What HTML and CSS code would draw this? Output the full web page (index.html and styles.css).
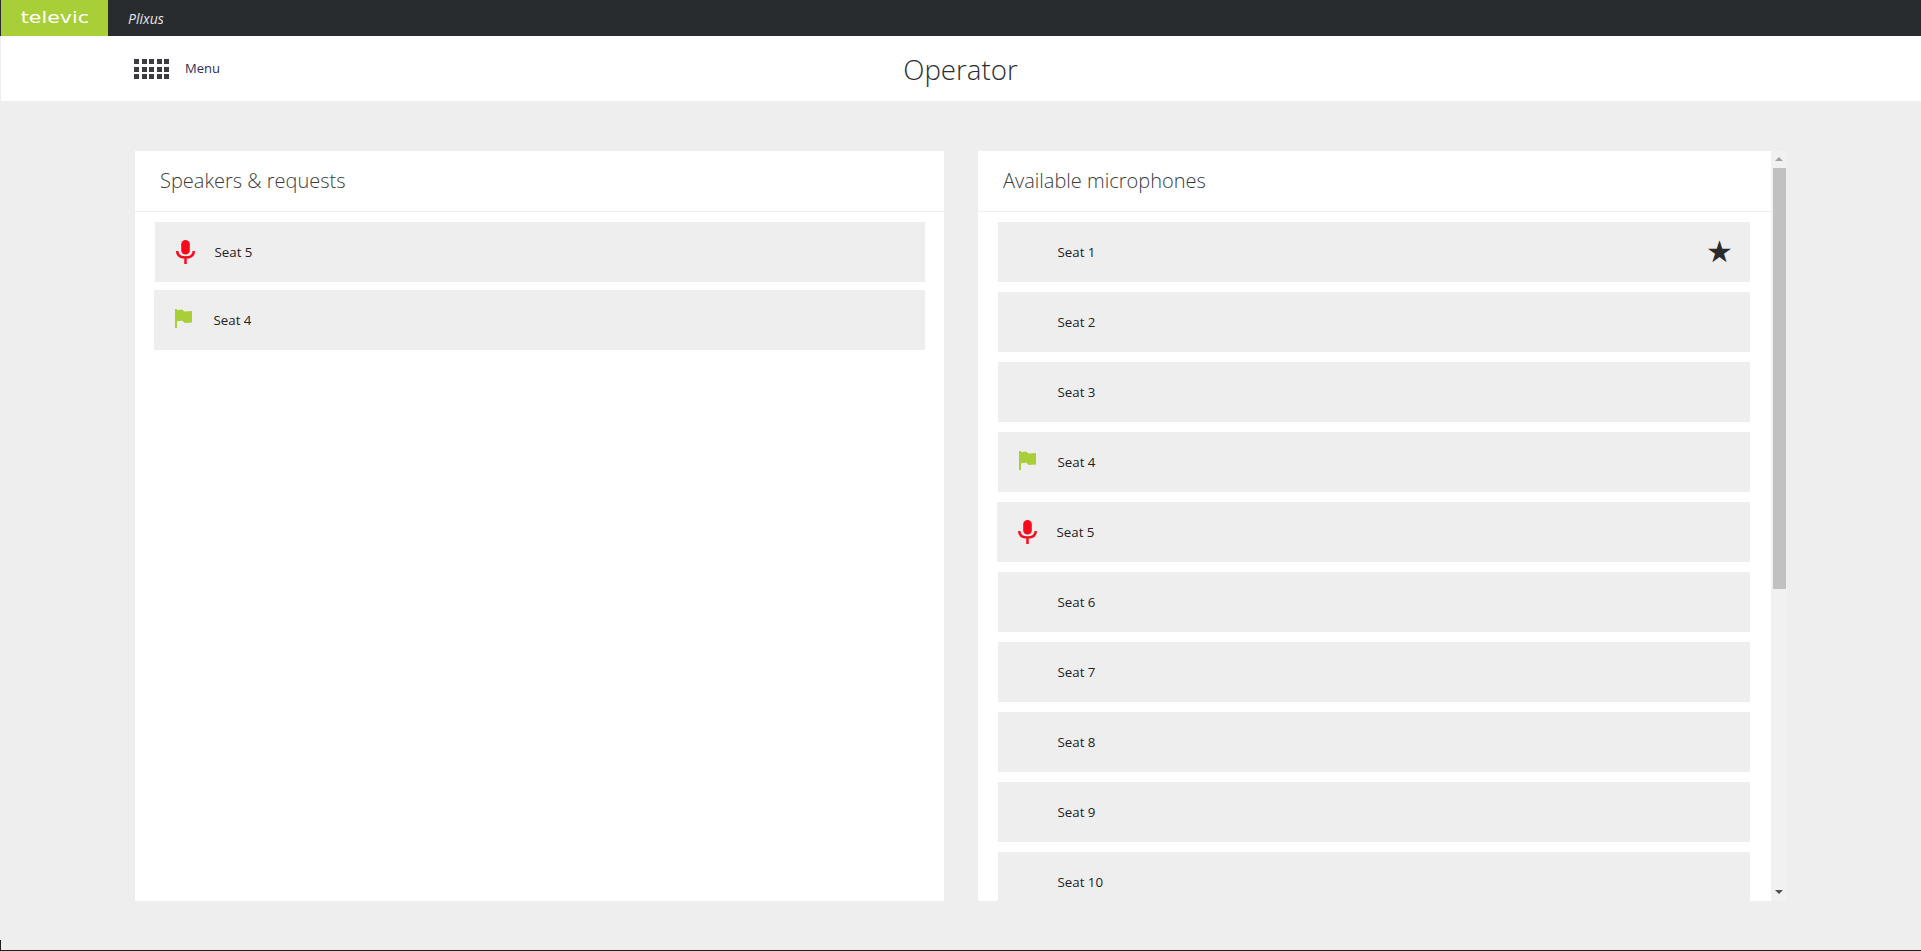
FILE: index.html
```html
<!DOCTYPE html>
<html lang="en">
<head>
<meta charset="utf-8">
<title>Operator</title>
<link rel="stylesheet" href="styles.css">
</head>
<body>
<div class="page">
  <header class="topbar">
    <div class="logo"><span class="logo-text">televic</span></div>
    <span class="product">Plixus</span>
  </header>
  <div class="subbar">
    <div class="menu">
      <div class="grid-icon">
        <i></i><i></i><i></i><i></i><i></i>
        <i></i><i></i><i></i><i></i><i></i>
        <i></i><i></i><i></i><i></i><i></i>
      </div>
      <span class="menu-label">Menu</span>
    </div>
    <h1 class="title">Operator</h1>
  </div>
  <main class="content">
    <section class="panel panel-left">
      <h2 class="panel-title">Speakers &amp; requests</h2>
      <div class="list list-left">
        <div class="seat">
          <span class="seat-icon"><svg class="mic" viewBox="0 0 19 24"><rect class="mic-head" x="5.200" y="0" width="8.600" height="14.500" rx="4.300"/><path class="mic-cradle" d="M1.250 11c0 4.500 3.700 6.500 8.250 6.500s8.250-2 8.250-6.500M9.500 17.500V24"/></svg></span>
          <span class="seat-name">Seat 5</span>
        </div>
        <div class="seat seat-out">
          <span class="seat-icon"><svg class="flag" viewBox="0 0 17 19"><path d="M0 0h2v1.300l5-.8 2.500 2 7.500-.5v11.500l-7 .5-2.800-2.300-5.200.5V19H0z"/></svg></span>
          <span class="seat-name">Seat 4</span>
        </div>
      </div>
    </section>
    <section class="panel panel-right">
      <div class="panel-body">
        <h2 class="panel-title">Available microphones</h2>
        <div class="list list-right">
          <div class="seat"><span class="seat-icon"></span><span class="seat-name">Seat 1</span><span class="star">★</span></div>
          <div class="seat"><span class="seat-icon"></span><span class="seat-name">Seat 2</span></div>
          <div class="seat"><span class="seat-icon"></span><span class="seat-name">Seat 3</span></div>
          <div class="seat"><span class="seat-icon"><svg class="flag" viewBox="0 0 17 19"><path d="M0 0h2v1.300l5-.8 2.500 2 7.500-.5v11.500l-7 .5-2.800-2.300-5.200.5V19H0z"/></svg></span><span class="seat-name">Seat 4</span></div>
          <div class="seat seat-out"><span class="seat-icon"><svg class="mic" viewBox="0 0 19 24"><rect class="mic-head" x="5.200" y="0" width="8.600" height="14.500" rx="4.300"/><path class="mic-cradle" d="M1.250 11c0 4.500 3.700 6.500 8.250 6.500s8.250-2 8.250-6.500M9.500 17.500V24"/></svg></span><span class="seat-name">Seat 5</span></div>
          <div class="seat"><span class="seat-icon"></span><span class="seat-name">Seat 6</span></div>
          <div class="seat"><span class="seat-icon"></span><span class="seat-name">Seat 7</span></div>
          <div class="seat"><span class="seat-icon"></span><span class="seat-name">Seat 8</span></div>
          <div class="seat"><span class="seat-icon"></span><span class="seat-name">Seat 9</span></div>
          <div class="seat"><span class="seat-icon"></span><span class="seat-name">Seat 10</span></div>
        </div>
      </div>
      <div class="scrollbar">
        <span class="arrow arrow-up"></span>
        <span class="thumb-track"><span class="thumb"></span></span>
        <span class="arrow arrow-down"></span>
      </div>
    </section>
  </main>
</div>
</body>
</html>
```
FILE: styles.css
```css
* { box-sizing: border-box; }
html, body { margin: 0; height: 100%; overflow: hidden; }
body {
  background: #eeeeee;
  font-family: "Open Sans", "Noto Sans", sans-serif;
  color: #2b2e31;
}
.page {
  height: 951px;
  position: relative;
  display: flex;
  flex-direction: column;
  border-bottom: 1px solid #1c1e20;
}
.page::after {
  content: "";
  position: absolute;
  left: 0;
  bottom: 0;
  width: 1px;
  height: 10px;
  background: #1c1e20;
}
.topbar {
  height: 36px;
  flex: none;
  display: flex;
  align-items: center;
  background: #282c2f;
}
.logo {
  width: 107px;
  height: 36px;
  margin-left: 1px;
  background: #a8cf38;
  display: flex;
  align-items: center;
  justify-content: center;
}
.logo-text {
  font-family: "DejaVu Sans", sans-serif;
  font-size: 15px;
  font-weight: 400;
  color: #fff;
  transform: scaleX(1.37);
}
.product {
  margin-left: 20px;
  font-size: 14px;
  font-style: italic;
  color: #e4e6e8;
}
.subbar {
  height: 65px;
  flex: none;
  margin-left: 1px;
  background: #fff;
  position: relative;
  display: flex;
  align-items: center;
  justify-content: center;
}
.menu {
  position: absolute;
  left: 133px;
  top: 23px;
  display: flex;
  align-items: center;
  gap: 16px;
}
.grid-icon {
  display: grid;
  grid-template-columns: repeat(5, 5px);
  grid-auto-rows: 5px;
  gap: 2.500px;
}
.grid-icon i { background: #3a3c3f; }
.menu-label { font-size: 13px; line-height: 18px; margin-top: -2px; color: #2d2d55; }
.title {
  margin: 0 0 0 -1px;
  font-size: 27.700px;
  font-weight: 300;
  color: #2b2e31;
  position: relative;
  top: 0;
}
.content {
  flex: 1;
  min-height: 0;
  display: flex;
  gap: 34px;
  padding: 50px 0 49px 135px;
}
.panel { background: #fff; overflow: hidden; }
.panel-left { width: 809px; }
.panel-right { width: 809px; display: flex; }
.panel-body { flex: 1; min-width: 0; overflow: hidden; }
.panel-title {
  margin: 0;
  height: 61px;
  padding: 16px 0 0 25px;
  font-size: 20px;
  line-height: 27px;
  font-weight: 300;
  color: #3a3c3e;
  border-bottom: 1px solid #efefef;
}
.list { display: flex; flex-direction: column; }
.list-left { padding: 10px 19px 0 20px; gap: 8px; }
.list-right { padding: 10px 21px 0 20px; gap: 10px; }
.seat {
  height: 60px;
  flex: none;
  background: #eeeeee;
  display: flex;
  align-items: center;
  font-size: 13.300px;
  font-weight: 400;
  color: #1e2125;
}
.seat-out { margin-left: -1px; }
.seat-icon {
  width: 60px;
  flex: none;
  display: flex;
  justify-content: center;
  align-items: center;
}
.seat-name { flex: 1; margin-left: -0.500px; }
.mic { width: 19px; height: 24px; }
.mic-head { fill: #fb0a1e; }
.mic-cradle { fill: none; stroke: #fb0a1e; stroke-width: 2.500; }
.flag { width: 17px; height: 19px; fill: #a8cf38; margin-left: -1px; margin-top: -3px; }
.star {
  width: 44px;
  font-family: "DejaVu Sans", sans-serif;
  font-size: 30px;
  line-height: 1;
  color: #2b2b2b;
}
.scrollbar {
  width: 16px;
  flex: none;
  background: #f1f1f1;
  display: flex;
  flex-direction: column;
}
.arrow { height: 17px; flex: none; position: relative; }
.arrow::after {
  content: "";
  position: absolute;
  left: 4px;
  width: 0;
  height: 0;
  border-left: 4px solid transparent;
  border-right: 4px solid transparent;
}
.arrow-up::after { top: 6px; border-bottom: 4px solid #a3a3a3; }
.arrow-down::after { bottom: 7px; border-top: 4px solid #505050; }
.thumb-track { flex: 1; padding: 0 1px 0 2px; }
.thumb { display: block; height: 421px; background: #c1c1c1; }
```
